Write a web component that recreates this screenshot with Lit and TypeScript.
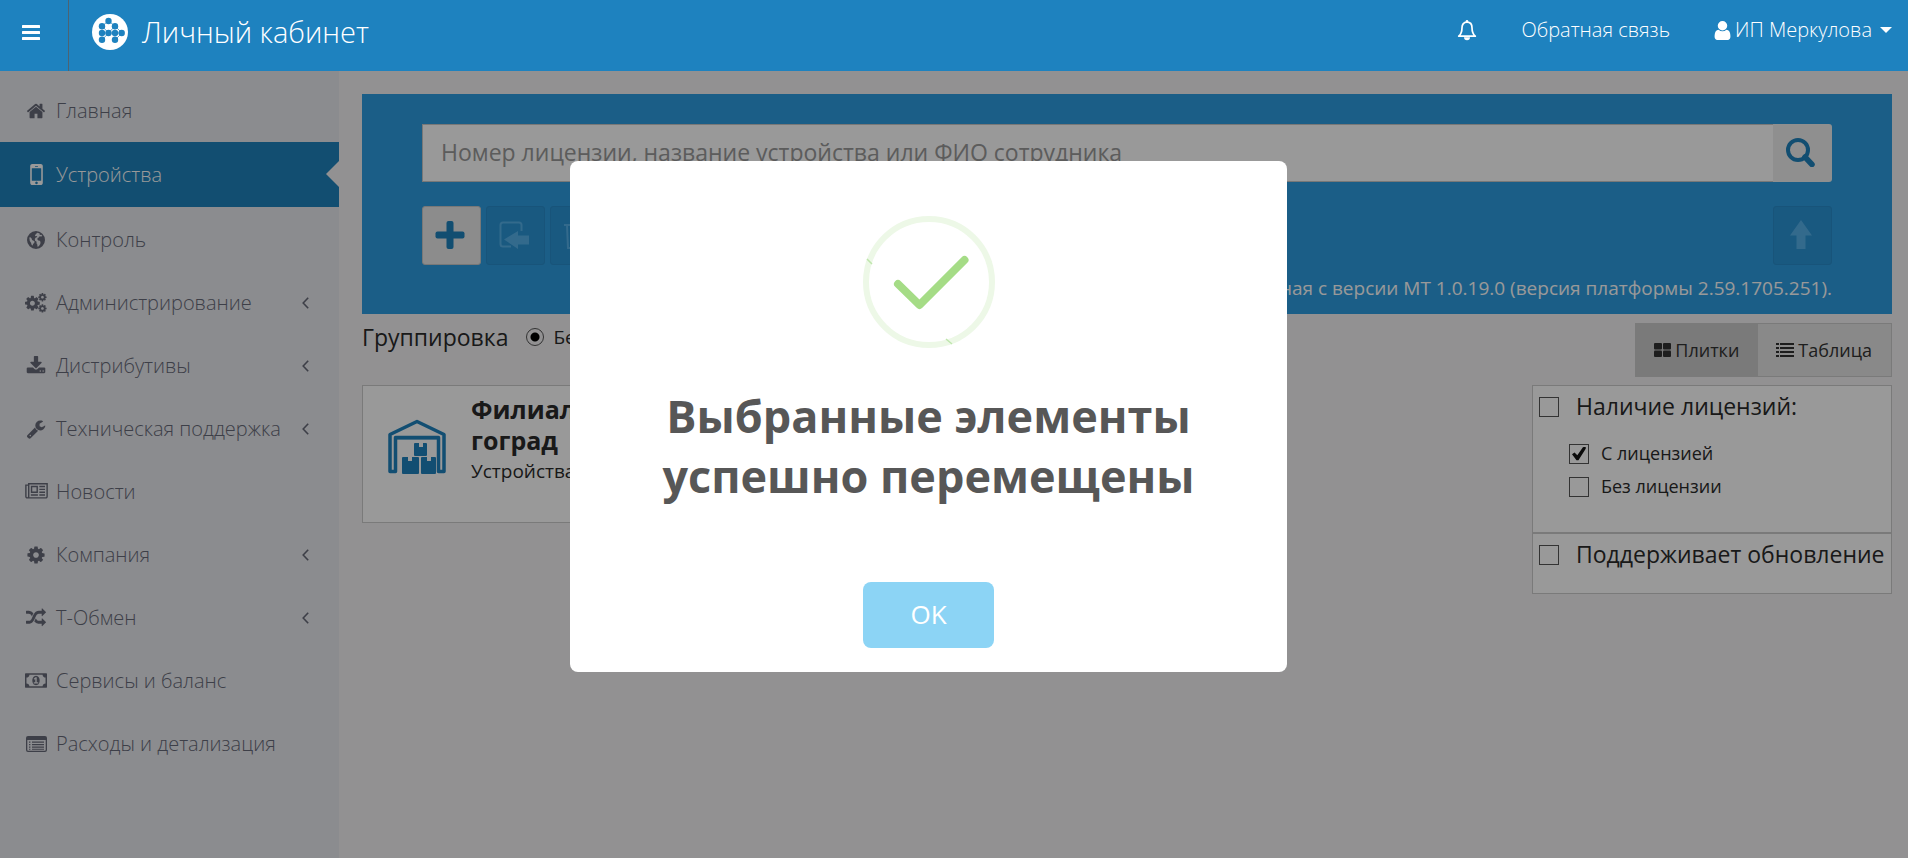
import { LitElement, html, svg, css, nothing, type SVGTemplateResult } from "lit";
import { customElement, property, state } from "lit/decorators.js";

const COG =
  "M1152 896q0-106-75-181t-181-75-181 75-75 181 75 181 181 75 181-75 75-181zm512-109v222q0 12-8 23t-20 13l-185 28q-19 54-39 91 35 50 107 138 10 12 10 25t-9 23q-27 37-99 108t-94 71q-12 0-26-9l-138-108q-44 23-91 38-16 136-29 186-7 28-36 28h-222q-14 0-24.5-8.5t-11.5-21.5l-28-184q-49-16-90-37l-141 107q-10 9-25 9-14 0-25-11-126-114-165-168-7-10-7-23 0-12 8-23 15-21 51-66.5t54-70.5q-27-50-41-99l-183-27q-13-2-21-12.5t-8-23.5v-222q0-12 8-23t19-13l186-28q14-46 39-92-40-57-107-138-10-12-10-24 0-10 9-23 26-36 98.5-107.5t94.5-71.5q13 0 26 10l138 107q44-23 91-38 16-136 29-186 7-28 36-28h222q14 0 24.5 8.5t11.5 21.5l28 184q49 16 90 37l142-107q9-9 24-9 13 0 25 10 129 119 165 170 7 8 7 22 0 12-8 23-15 21-51 66.5t-54 70.5q26 50 41 98l183 28q13 2 21 12.5t8 23.5z";

interface Icon {
  box: string;
  w: number;
  h: number;
  body: SVGTemplateResult;
}

const path = (d: string) => svg`<path d=${d} />`;

const ICONS: Record<string, Icon> = {
  bars: {
    box: "0 0 18 15", w: 18, h: 15,
    body: svg`<rect width="18" height="3" rx="0.5"/><rect y="6" width="18" height="3" rx="0.5"/><rect y="12" width="18" height="3" rx="0.5"/>`,
  },
  home: {
    box: "0 0 1792 1792", w: 20, h: 20,
    body: path("M1472 992v480q0 26-19 45t-45 19h-384v-384h-256v384h-384q-26 0-45-19t-19-45v-480q0-1 .5-3t.5-3l575-474 575 474q1 2 1 6zm223-69l-62 74q-8 9-21 11h-3q-13 0-21-7l-692-577-692 577q-12 8-24 7-13-2-21-11l-62-74q-8-10-7-23.5t11-21.5l719-599q32-26 76-26t76 26l244 204v-195q0-14 9-23t23-9h192q14 0 23 9t9 23v408l219 182q10 8 11 21.5t-7 23.5z"),
  },
  mobile: {
    box: "512 256 768 1280", w: 13, h: 21,
    body: path("M976 1408q0-33-23.5-56.5t-56.5-23.5-56.5 23.5-23.5 56.5 23.5 56.5 56.5 23.5 56.5-23.5 23.5-56.5zm208-160v-704q0-13-9.5-22.5t-22.5-9.5h-512q-13 0-22.5 9.5t-9.5 22.5v704q0 13 9.5 22.5t22.5 9.5h512q13 0 22.5-9.5t9.5-22.5zm-192-848q0-16-16-16h-160q-16 0-16 16t16 16h160q16 0 16-16zm288-16v1024q0 52-38 90t-90 38h-512q-52 0-90-38t-38-90v-1024q0-52 38-90t90-38h512q52 0 90 38t38 90z"),
  },
  globe: {
    box: "0 0 18 18", w: 18, h: 18,
    body: svg`<path fill-rule="evenodd" d="M9 0a9 9 0 1 1 0 18a9 9 0 0 1 0-18zM10.200 1.700l2.600.7-.5.900 1.200.8.900-.3.900 1.200-1.100.500-1.600-.2-.800 1.300-1.200.500-.200 1.500.900.900 1.500.200.700 1.200-.200 2.100-1.500 2.300-1.300.500-.200-2.200-.8-1.400.1-1.500-1.500-1-.300-1.600 1-1.600 1.500-.600-.600-.900-1.300.3-.500-1.100zM2.300 6.400l1.100-.2 1.400 1.600.2 1.200 1.600.7 1 .9-.4 1.500-1.200.9-.2 1.500-1.100-.600-.7-2.200-1.200-1.700z"/>`,
  },
  cog: { box: "0 0 1792 1792", w: 20, h: 20, body: path(COG) },
  cogs: {
    box: "0 0 22 20", w: 22, h: 20,
    body: svg`<path d=${COG} transform="translate(-1.2 1.6) scale(.0096)"/><path d=${COG} transform="translate(12.6 -.6) scale(.0054)"/><path d=${COG} transform="translate(12.6 10.6) scale(.0054)"/>`,
  },
  download: {
    box: "0 0 1792 1792", w: 20, h: 20,
    body: path("M1344 1344q0-26-19-45t-45-19-45 19-19 45 19 45 45 19 45-19 19-45zm256 0q0-26-19-45t-45-19-45 19-19 45 19 45 45 19 45-19 19-45zm128-224v320q0 40-28 68t-68 28h-1472q-40 0-68-28t-28-68v-320q0-40 28-68t68-28h465l135 136q58 56 136 56t136-56l136-136h464q40 0 68 28t28 68zm-325-569q17 41-14 70l-448 448q-18 19-45 19t-45-19l-448-448q-31-29-14-70 17-39 59-39h256v-448q0-26 19-45t45-19h256q26 0 45 19t19 45v448h256q42 0 59 39z"),
  },
  wrench: {
    box: "0 0 1792 1792", w: 20, h: 20,
    body: path("M448 1472q0-26-19-45t-45-19-45 19-19 45 19 45 45 19 45-19 19-45zm644-420l-682 682q-37 37-90 37-52 0-91-37l-106-108q-38-36-38-90 0-53 38-91l681-681q39 98 114.5 173.5t173.5 114.5zm634-435q0 39-23 106-47 134-164.5 217.5t-258.5 83.5q-185 0-316.5-131.5t-131.5-316.5 131.5-316.5 316.5-131.5q58 0 121.5 16.5t107.5 46.5q16 11 16 28t-16 28l-293 169v224l193 107q5-3 79-48.5t135.5-81 70.5-35.5q15 0 23.5 10t8.5 25z"),
  },
  news: {
    box: "0 128 2048 1536", w: 23, h: 17,
    body: path("M1024 512h-384v384h384v-384zm128 640v128h-640v-128h640zm0-768v640h-640v-640h640zm640 768v128h-512v-128h512zm0-256v128h-512v-128h512zm0-256v128h-512v-128h512zm0-256v128h-512v-128h512zm-1536 960v-960h-128v960q0 26 19 45t45 19 45-19 19-45zm1664 0v-1088h-1536v1088q0 33-11 64h1483q26 0 45-19t19-45zm128-1216v1216q0 80-56 136t-136 56h-1664q-80 0-136-56t-56-136v-1088h256v-128h1792z"),
  },
  random: {
    box: "0 0 1792 1792", w: 20, h: 20,
    body: path("M666 481q-60 92-137 273-22-45-37-72.5t-40.5-63.5-51-56.5-63-35-81.5-14.5h-224q-14 0-23-9t-9-23v-192q0-14 9-23t23-9h224q250 0 410 225zm1126 799q0 14-9 23l-320 320q-9 9-23 9-13 0-22.5-9.5t-9.5-22.5v-192q-32 0-85 .5t-81 1-73-1-71-5-64-10.5-63-18.5-58-28.5-59-40-55-53.5-56-69.5q59-93 136-273 22 45 37 72.5t40.5 63.5 51 56.5 63 35 81.5 14.5h256v-192q0-14 9-23t23-9q12 0 24 10l319 319q9 9 9 23zm0-896q0 14-9 23l-320 320q-9 9-23 9-13 0-22.5-9.5t-9.5-22.5v-192h-256q-48 0-87 15t-69 45-51 61.5-45 77.5q-32 62-78 171-29 66-49.5 111t-54 105-64 100-74 83-90 68.5-106.5 42-128 16.5h-224q-14 0-23-9t-9-23v-192q0-14 9-23t23-9h224q48 0 87-15t69-45 51-61.5 45-77.5q32-62 78-171 29-66 49.5-111t54-105 64-100 74-83 90-68.5 106.5-42 128-16.5h256v-192q0-14 9-23t23-9q12 0 24 10l319 319q9 9 9 23z"),
  },
  money: {
    box: "0 256 1920 1280", w: 22, h: 15,
    body: path("M768 1152h384v-96h-128v-448h-114l-148 137 77 80q42-37 55-57h2v288h-128v96zm512-256q0 70-21 142t-59.5 134-101.5 101-138 39-138-39-101.5-101-59.5-134-21-142 21-142 59.5-134 101.5-101 138-39 138 39 101.5 101 59.5 134 21 142zm512 256v-512q-106 0-181-75t-75-181h-1152q0 106-75 181t-181 75v512q106 0 181 75t75 181h1152q0-106 75-181t181-75zm128-832v1152q0 26-19 45t-45 19h-1792q-26 0-45-19t-19-45v-1152q0-26 19-45t45-19h1792q26 0 45 19t19 45z"),
  },
  listAlt: {
    box: "0 0 21 16", w: 21, h: 16,
    body: svg`<path fill-rule="evenodd" d="M2 0h17q2 0 2 2v12q0 2-2 2h-17q-2 0-2-2v-12q0-2 2-2zM1.3 4v10q0 .7.7.7h17q.7 0 .7-.7v-10z"/><path d="M3 5.5h1.4v1.3H3zM6 5.5h12v1.3H6zM3 8h1.4v1.3H3zM6 8h12v1.3H6zM3 10.5h1.4v1.3H3zM6 10.5h12v1.3H6zM3 12.7h1.4v1.1H3zM6 12.7h12v1.1H6z"/>`,
  },
  chevron: {
    box: "0 0 7 12", w: 7, h: 12,
    body: svg`<path d="M6.2.8 1.2 6l5 5.2" fill="none" stroke="currentColor" stroke-width="1.6"/>`,
  },
  bell: {
    box: "0 0 20 21", w: 20, h: 21,
    body: svg`<path d="M10 2.2c-3.6 0-5 2.6-5 5.6 0 4-1 6.6-3.3 8.4h16.6c-2.3-1.8-3.3-4.4-3.3-8.4 0-3-1.4-5.6-5-5.6z" fill="none" stroke="currentColor" stroke-width="1.7" stroke-linejoin="round"/><circle cx="10" cy="1.300" r="1.300"/><path d="M7 17.2h6a3 3 0 0 1-6 0z"/>`,
  },
  user: {
    box: "256 128 1280 1536", w: 17, h: 19,
    body: path("M1536 1399q0 109-62.5 187t-150.5 78h-854q-88 0-150.5-78t-62.5-187q0-85 8.5-160.5t31.5-152 58.5-131 94-89 134.5-34.5q131 128 313 128t313-128q76 0 134.5 34.5t94 89 58.5 131 31.5 152 8.5 160.5zm-256-887q0 159-112.5 271.5t-271.5 112.5-271.5-112.5-112.5-271.5 112.5-271.5 271.5-112.5 271.5 112.5 112.5 271.5z"),
  },
  caret: { box: "0 0 12 6", w: 12, h: 6, body: path("M0 0h12l-6 6z") },
  plus: {
    box: "0 0 30 30", w: 30, h: 30,
    body: svg`<rect x="11.5" y="1" width="7" height="28" rx="2"/><rect x="0.5" y="11.5" width="29" height="7" rx="2"/>`,
  },
  move: {
    box: "0 0 30 28", w: 30, h: 28,
    body: svg`<path d="M22.5 10V4q0-2.500-2.500-2.500H4Q1.500 1.500 1.500 4v19Q1.500 25.500 4 25.500h8" fill="none" stroke="currentColor" stroke-width="2"/><path d="M5 18.500 19 10v4.500h11v9H19V28z"/>`,
  },
  trash: {
    box: "0 0 30 30", w: 30, h: 30,
    body: svg`<path d="M1 5h28M11 5V2h8v3M4 5l1 23h20l1-23M11 10v13M15 10v13M19 10v13" fill="none" stroke="currentColor" stroke-width="2"/>`,
  },
  arrowUp: { box: "0 0 22 29", w: 22, h: 29, body: path("M11 0 22 15.500h-6.500V29h-9V15.500H0z") },
  search: {
    box: "0 0 29 29", w: 29, h: 29,
    body: svg`<circle cx="12" cy="12" r="10" fill="none" stroke="currentColor" stroke-width="4"/><path d="M19 19l7 7.500" stroke="currentColor" stroke-width="5.500" stroke-linecap="round"/>`,
  },
  tiles: {
    box: "0 0 17 14", w: 17, h: 14,
    body: svg`<rect width="8" height="6.500" rx="1"/><rect x="9" width="8" height="6.500" rx="1"/><rect y="7.500" width="8" height="6.500" rx="1"/><rect x="9" y="7.500" width="8" height="6.500" rx="1"/>`,
  },
  list: {
    box: "0 0 18 14", w: 18, h: 14,
    body: svg`<path d="M0 0h3v2H0zM4 0h14v2H4zM0 4h3v2H0zM4 4h14v2H4zM0 8h3v2H0zM4 8h14v2H4zM0 12h3v2H0zM4 12h14v2H4z"/>`,
  },
  logo: {
    box: "0 0 36 36", w: 36, h: 36,
    body: svg`<circle cx="18" cy="18" r="18"/><g fill="#1e82bf"><circle cx="16.500" cy="7" r="3.200"/><circle cx="10" cy="12.200" r="3.200"/><circle cx="23" cy="12.200" r="3.200"/><circle cx="10" cy="19" r="3.200"/><circle cx="16.500" cy="19" r="3.200"/><circle cx="23" cy="19" r="3.200"/><circle cx="29.700" cy="19" r="3.200"/><circle cx="10" cy="25.800" r="3.200"/><circle cx="23" cy="25.800" r="3.200"/></g><path d="M10 19h20M16.500 7l-6.500 5M16.500 7l6.500 5M10 12l6.500 7M23 12l7 7M23 12l-6.500 7M10 26l6.500-7M23 26l7-7" stroke="#1e82bf" stroke-width="0.700"/>`,
  },
  warehouse: {
    box: "0 0 58 55", w: 58, h: 55,
    body: svg`<path d="M2 52.500V15.500L29 2.500l27 13v37h-5.500v-34h-43v34z" fill="none" stroke="currentColor" stroke-width="3.500" stroke-linejoin="round"/><path d="M7 19h44" stroke="currentColor" stroke-width="3"/><path d="M28 24h3v4h4v-4h3q1 0 1 1v11q0 1-1 1H27q-1 0-1-1V25q0-1 1-1zM15 38h5v4h4v-4h6q1 0 1 1v15q0 1-1 1H15q-1 0-1-1V39q0-1 1-1zM34 38h5v4h4v-4h4q1 0 1 1v15q0 1-1 1H34q-1 0-1-1V39q0-1 1-1z"/>`,
  },
};

function icon(name: string) {
  const i = ICONS[name];
  return html`<svg viewBox=${i.box} width=${i.w} height=${i.h} fill="currentColor" aria-hidden="true">${i.body}</svg>`;
}

@customElement("app-header")
class AppHeader extends LitElement {
  static styles = css`
    :host { display: flex; height: 71px; box-sizing: border-box; background: #1e82bf; color: #fff; font-weight: 300; }
    svg { display: block; flex: none; }
    button { font: inherit; color: inherit; background: none; border: 0; padding: 0; cursor: pointer; }
    .burger { width: 69px; padding: 0 0 7px 22px; border-right: 1px solid #4b6373; box-sizing: border-box; }
    .brand { display: flex; align-items: center; gap: 14px; margin-left: 23px; padding-bottom: 7px; font-size: 29px; line-height: 40px; color: #fff; text-decoration: none; }
    .tools { display: flex; align-items: center; margin-left: auto; gap: 44px; padding: 0 16px 11px 0; font-size: 20px; line-height: 28px; }
    .tools a { color: #fff; text-decoration: none; }
    .account { display: flex; align-items: center; gap: 4px; }
    .account svg:last-child { margin-left: 4px; }
  `;
  render() {
    return html`
      <button class="burger" aria-label="Меню">${icon("bars")}</button>
      <a class="brand" href="#">${icon("logo")}<span>Личный кабинет</span></a>
      <div class="tools">
        <button aria-label="Уведомления">${icon("bell")}</button>
        <a href="#feedback">Обратная связь</a>
        <button class="account">${icon("user")}<span>ИП Меркулова</span>${icon("caret")}</button>
      </div>
    `;
  }
}

const MENU: [string, string, boolean][] = [
  ["home", "Главная", false],
  ["mobile", "Устройства", false],
  ["globe", "Контроль", false],
  ["cogs", "Администрирование", true],
  ["download", "Дистрибутивы", true],
  ["wrench", "Техническая поддержка", true],
  ["news", "Новости", false],
  ["cog", "Компания", true],
  ["random", "Т-Обмен", true],
  ["money", "Сервисы и баланс", false],
  ["listAlt", "Расходы и детализация", false],
];

@customElement("side-menu")
class SideMenu extends LitElement {
  @property() active = "";
  static styles = css`
    :host { display: block; background: #e8e9ee; padding-top: 8px; }
    svg { display: block; }
    a { display: flex; align-items: center; height: 63px; padding: 0 30px 0 24px; color: #676a78; text-decoration: none; font-size: 20px; line-height: 28px; font-weight: 300; }
    a.active { height: 65px; margin-bottom: 1px; background: #1e82bc; color: #fff; position: relative; }
    a.active::after { content: ""; position: absolute; right: 0; top: 19px; border: 13px solid transparent; border-left: 0; border-right-color: #f3f2f4; }
    .icon { width: 24px; display: flex; justify-content: center; margin-right: 8px; }
    .label { flex: 1; white-space: nowrap; }
  `;
  render() {
    return html`<nav>
      ${MENU.map(
        ([name, label, nested]) => html`<a href="#" class=${label === this.active ? "active" : ""}>
          <span class="icon">${icon(name)}</span><span class="label">${label}</span>${nested ? icon("chevron") : nothing}
        </a>`
      )}
    </nav>`;
  }
}

@customElement("device-toolbar")
class DeviceToolbar extends LitElement {
  static styles = css`
    :host { display: block; background: #2d9de1; padding: 30px 60px 11px; }
    svg { display: block; }
    .search { display: flex; height: 58px; }
    input { flex: 1; min-width: 0; box-sizing: border-box; border: 1px solid #c8c8c8; border-right: 0; border-radius: 0; padding: 0 18px 2px; background: #fff; font: inherit; font-size: 23px; color: #555; }
    input::placeholder { color: #999; opacity: 1; }
    button { width: 59px; height: 59px; box-sizing: border-box; display: flex; align-items: center; justify-content: center; padding: 0 4px 2px 0; border: 1px solid #c8c8c8; border-radius: 3px; background: #e9e9e9; color: #1e82bc; }
    button:disabled { background: #2b94d5; border-color: #298dcb; color: #55b1ea; }
    .search button { height: 58px; border: 0; border-radius: 0 3px 3px 0; background: #eee; }
    .actions { display: flex; gap: 5px; margin-top: 24px; }
    .up { margin-left: auto; }
    p { margin: 8px 0 0; text-align: right; font-size: 19px; line-height: 30px; color: #fff; }
  `;
  render() {
    return html`
      <div class="search">
        <input type="text" aria-label="Поиск" placeholder="Номер лицензии, название устройства или ФИО сотрудника" />
        <button aria-label="Найти">${icon("search")}</button>
      </div>
      <div class="actions">
        <button aria-label="Добавить">${icon("plus")}</button>
        <button aria-label="Переместить" disabled>${icon("move")}</button>
        <button aria-label="Удалить" disabled>${icon("trash")}</button>
        <button class="up" aria-label="Наверх" disabled>${icon("arrowUp")}</button>
      </div>
      <p>Обновление доступно, начиная с версии МТ 1.0.19.0 (версия платформы 2.59.1705.251).</p>
    `;
  }
}

@customElement("device-list")
class DeviceList extends LitElement {
  static styles = css`
    :host { display: block; color: #2b2b2b; }
    svg { display: block; flex: none; }
    .bar { display: flex; align-items: flex-start; justify-content: space-between; padding-top: 9px; }
    fieldset { display: flex; align-items: center; border: 0; margin: 0; padding: 0; }
    legend { float: left; padding: 0; margin-right: 18px; font-size: 23px; line-height: 28px; }
    .radio { display: flex; align-items: center; gap: 9px; font-size: 19px; line-height: 28px; }
    .radio input { appearance: none; width: 18px; height: 18px; margin: 0; border: 1px solid #555; border-radius: 50%; background: radial-gradient(circle, #000 4px, transparent 5px); }
    .tabs { display: flex; border: 1px solid #cbcbcb; box-sizing: border-box; height: 54px; }
    .tabs button { display: flex; align-items: center; gap: 4px; padding: 0 19px 0 18px; border: 0; background: #e5e5e5; color: #333; font: inherit; font-size: 18px; line-height: 26px; }
    .tabs .on { background: #cbcbcb; }
    .cols { display: flex; align-items: flex-start; justify-content: space-between; margin-top: 8px; }
    .card { display: flex; gap: 25px; width: 480px; min-height: 138px; box-sizing: border-box; border: 1px solid #cbcbcb; background: #fff; padding: 8px 25px; }
    .card svg { margin-top: 25px; color: #1e82bf; }
    .card h3 { margin: 0; font-size: 25px; line-height: 31px; font-weight: 700; }
    .card p { margin: 0; font-size: 19px; line-height: 30px; }
    .filters { width: 360px; }
    .box { box-sizing: border-box; border: 1px solid #cbcbcb; background: #fff; padding: 5px 6px; min-height: 61px; }
    .tall { min-height: 148px; }
    label { display: flex; align-items: center; }
    .main { gap: 17px; font-size: 23px; line-height: 31px; white-space: nowrap; }
    .sub { gap: 12px; font-size: 18px; line-height: 33px; padding-left: 30px; }
    .main + .sub { margin-top: 15px; }
    .box input { appearance: none; position: relative; flex: none; width: 20px; height: 20px; margin: 0; box-sizing: border-box; border: 1px solid #555; background: #fff; }
    .box input:checked::after { content: ""; position: absolute; inset: 2px; background: #111; clip-path: polygon(0 55%, 18% 42%, 38% 62%, 78% 6%, 98% 0, 98% 16%, 46% 98%, 32% 98%); }
  `;
  render() {
    return html`
      <div class="bar">
        <fieldset>
          <legend>Группировка</legend>
          <label class="radio"><input type="radio" name="group" checked />Без группировки</label>
        </fieldset>
        <div class="tabs">
          <button class="on">${icon("tiles")}<span>Плитки</span></button>
          <button>${icon("list")}<span>Таблица</span></button>
        </div>
      </div>
      <div class="cols">
        <article class="card">
          ${icon("warehouse")}
          <div>
            <h3>Филиал Вол-<br />гоград</h3>
            <p>Устройства: 1</p>
          </div>
        </article>
        <aside class="filters">
          <div class="box tall">
            <label class="main"><input type="checkbox" />Наличие лицензий:</label>
            <label class="sub"><input type="checkbox" checked />С лицензией</label>
            <label class="sub"><input type="checkbox" />Без лицензии</label>
          </div>
          <div class="box">
            <label class="main"><input type="checkbox" />Поддерживает обновление</label>
          </div>
        </aside>
      </div>
    `;
  }
}

@customElement("success-dialog")
class SuccessDialog extends LitElement {
  static styles = css`
    :host { position: fixed; inset: 0; display: flex; align-items: center; justify-content: center; padding: 0 51px 25px 0; background: rgba(0, 0, 0, 0.4); }
    .dialog { display: flex; flex-direction: column; align-items: center; width: 717px; box-sizing: border-box; padding: 55px 28px 24px; background: #fff; border-radius: 8px; text-align: center; }
    svg { display: block; }
    h2 { margin: 38px 0 76px; max-width: 600px; font-size: 45px; line-height: 60px; font-weight: 700; color: #575757; }
    button { min-width: 131px; height: 66px; padding: 0 0 2px; border: 0; border-radius: 8px; background: #8cd4f5; color: #fff; font: inherit; font-size: 26px; line-height: 38px; cursor: pointer; }
  `;
  render() {
    return html`
      <div class="dialog" role="alertdialog" aria-modal="true" aria-labelledby="title">
        <svg width="132" height="132" viewBox="0 0 132 132" fill="none" aria-hidden="true">
          <circle cx="66" cy="66" r="63" stroke="#edf8e7" stroke-width="6" />
          <path d="M4 43l5 5M83 123l6 5" stroke="#bfe6ad" stroke-width="1.500" />
          <path d="M35 68l21.500 21L101.500 44" stroke="#a5dc86" stroke-width="8" stroke-linecap="round" stroke-linejoin="round" />
        </svg>
        <h2 id="title">Выбранные элементы успешно перемещены</h2>
        <button @click=${() => this.dispatchEvent(new CustomEvent("close"))}>OK</button>
      </div>
    `;
  }
}

@customElement("app-root")
class AppRoot extends LitElement {
  @state() private dialogOpen = true;
  static styles = css`
    :host { display: flex; flex-direction: column; min-height: 100vh; background: #f3f2f4; font-family: "Open Sans", "Noto Sans", sans-serif; }
    app-header { position: relative; z-index: 2; }
    .body { flex: 1; display: flex; }
    side-menu { flex: none; width: 339px; }
    main { flex: 1; min-width: 0; padding: 23px 16px 23px 23px; }
    success-dialog { z-index: 1; }
  `;
  render() {
    return html`
      <app-header></app-header>
      <div class="body">
        <side-menu active="Устройства"></side-menu>
        <main>
          <device-toolbar></device-toolbar>
          <device-list></device-list>
        </main>
      </div>
      ${this.dialogOpen ? html`<success-dialog @close=${() => (this.dialogOpen = false)}></success-dialog>` : nothing}
    `;
  }
}
